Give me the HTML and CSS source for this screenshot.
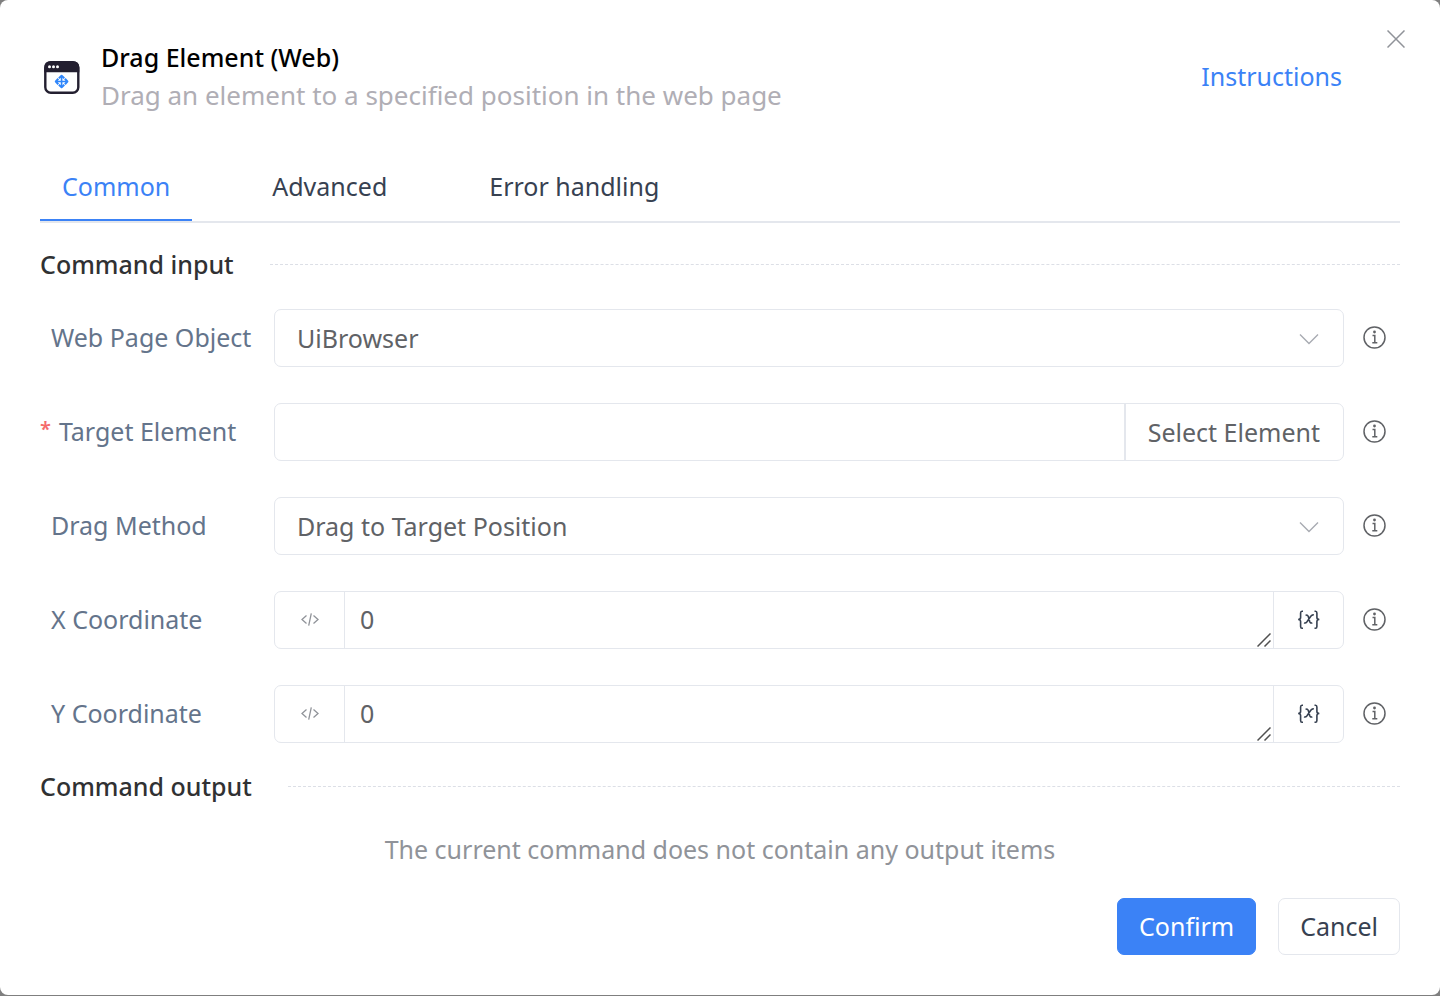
FILE: index.html
```html
<!DOCTYPE html>
<html lang="en">
<head>
<meta charset="utf-8">
<meta name="viewport" content="width=device-width, initial-scale=1">
<title>Drag Element (Web)</title>
<link rel="stylesheet" href="styles.css">
</head>
<body>
<svg class="sprite" aria-hidden="true">
  <symbol id="info" viewBox="0 0 24 24">
    <circle cx="11.500" cy="11.500" r="10.500" fill="none" stroke="currentColor" stroke-width="1.500"/>
    <circle cx="11.500" cy="6" r="1.400" fill="currentColor"/>
    <path d="M9.500 9.500h2.300v7.300M9.300 16.800h5" fill="none" stroke="currentColor" stroke-width="1.500"/>
  </symbol>
  <symbol id="chevron" viewBox="0 0 20 12">
    <path d="M1 1.5l9 9 9-9" fill="none" stroke="currentColor" stroke-width="1.4"/>
  </symbol>
  <symbol id="code" viewBox="0 0 18 14">
    <path d="M5.500 2.500L1 6.500l4.500 4M12.500 2.500L17 6.500l-4.500 4M10.300 .3L7.700 12.700" fill="none" stroke="currentColor" stroke-width="1.300"/>
  </symbol>
  <symbol id="variable" viewBox="0 0 24 20">
    <path d="M6 1.200H5Q3.600 1.200 3.600 3V7.500Q3.600 9.300 1.200 9.500Q3.600 9.700 3.600 11.500V16.500Q3.600 18.200 5 18.200H6M17.500 1.200H18.500Q19.900 1.200 19.900 3V7.500Q19.900 9.300 22.300 9.500Q19.900 9.700 19.900 11.500V16.500Q19.900 18.200 18.500 18.200H17.500" fill="none" stroke="currentColor" stroke-width="1.600"/>
    <path d="M8.600 5.500Q10.500 4.300 11.300 6.500L12.700 11.500Q13.400 13.700 15.300 12.700M16.800 5Q15.200 4.500 13.800 6.300L10 11.800Q8.700 13.500 7 12.900" fill="none" stroke="currentColor" stroke-width="1.600"/>
  </symbol>
  <symbol id="grip" viewBox="0 0 14 14">
    <path d="M.5 13.500L13.500 .5M7.500 13.500l6-6" fill="none" stroke="currentColor" stroke-width="1.500"/>
  </symbol>
</svg>

<main class="dialog" role="dialog" aria-labelledby="dialog-title">
  <button class="close" type="button" aria-label="Close">
    <svg width="18" height="18" viewBox="0 0 18 18"><path d="M.5 .5l17 17M17.500 .5L.5 17.500" fill="none" stroke="currentColor" stroke-width="1.500"/></svg>
  </button>

  <header class="header">
    <svg class="logo" width="36" height="38" viewBox="0 -4 36 38" aria-hidden="true">
      <rect x="1.300" y="1.300" width="33" height="30.500" rx="5.500" fill="#fff" stroke="#231f30" stroke-width="2.400"/>
      <path d="M.3 11.200V6.500Q.3 .3 6.500 .3H29Q35.300 .3 35.300 6.500V11.200Z" fill="#231f30"/>
      <g fill="#fff"><circle cx="5.500" cy="5.800" r="1.500"/><circle cx="9.500" cy="5.800" r="1.500"/><circle cx="13.500" cy="5.800" r="1.500"/></g>
      <path d="M17.600 15.500V25.500M12.600 20.500H22.600" stroke="#2f86fb" stroke-width="1.600"/>
      <path d="M14.900 17.200L17.600 14.700L20.300 17.200M14.900 23.800L17.600 26.300L20.300 23.800M14.300 17.800L11.800 20.500L14.300 23.200M20.900 17.800L23.400 20.500L20.900 23.200" fill="none" stroke="#2f86fb" stroke-width="2" stroke-linejoin="round"/>
    </svg>
    <div class="heading">
      <h1 class="title" id="dialog-title">Drag Element (Web)</h1>
      <p class="subtitle">Drag an element to a specified position in the web page</p>
    </div>
    <a class="instructions" href="#">Instructions</a>
  </header>

  <div class="tabs" role="tablist">
    <button class="tab active" type="button" role="tab" aria-selected="true">Common</button>
    <button class="tab" type="button" role="tab" aria-selected="false">Advanced</button>
    <button class="tab" type="button" role="tab" aria-selected="false">Error handling</button>
  </div>

  <form class="form">
    <h2 class="section">Command input</h2>
    <div class="rows">
      <div class="row">
        <label class="label" for="page-object">Web Page Object</label>
        <div class="field">
          <select class="control" id="page-object"><option>UiBrowser</option></select>
          <svg class="chevron"><use href="#chevron"/></svg>
        </div>
        <svg class="info"><use href="#info"/></svg>
      </div>
      <div class="row">
        <label class="label required" for="target">Target Element</label>
        <div class="field">
          <input class="control" id="target" type="text">
          <button class="pick" type="button">Select Element</button>
        </div>
        <svg class="info"><use href="#info"/></svg>
      </div>
      <div class="row">
        <label class="label" for="method">Drag Method</label>
        <div class="field">
          <select class="control" id="method"><option>Drag to Target Position</option></select>
          <svg class="chevron"><use href="#chevron"/></svg>
        </div>
        <svg class="info"><use href="#info"/></svg>
      </div>
      <div class="row">
        <label class="label" for="x">X Coordinate</label>
        <div class="field">
          <button class="addon code" type="button" aria-label="Expression mode"><svg width="18" height="14"><use href="#code"/></svg></button>
          <div class="area">
            <textarea class="control text" id="x" rows="1">0</textarea>
            <svg class="grip"><use href="#grip"/></svg>
          </div>
          <button class="addon variable" type="button" aria-label="Insert variable"><svg width="24" height="20"><use href="#variable"/></svg></button>
        </div>
        <svg class="info"><use href="#info"/></svg>
      </div>
      <div class="row">
        <label class="label" for="y">Y Coordinate</label>
        <div class="field">
          <button class="addon code" type="button" aria-label="Expression mode"><svg width="18" height="14"><use href="#code"/></svg></button>
          <div class="area">
            <textarea class="control text" id="y" rows="1">0</textarea>
            <svg class="grip"><use href="#grip"/></svg>
          </div>
          <button class="addon variable" type="button" aria-label="Insert variable"><svg width="24" height="20"><use href="#variable"/></svg></button>
        </div>
        <svg class="info"><use href="#info"/></svg>
      </div>
    </div>

    <h2 class="section">Command output</h2>
    <p class="empty">The current command does not contain any output items</p>

    <footer class="footer">
      <button class="button primary" type="submit">Confirm</button>
      <button class="button" type="button">Cancel</button>
    </footer>
  </form>
</main>
</body>
</html>
```
FILE: styles.css
```css
* {
  box-sizing: border-box;
}

body {
  margin: 0;
  padding-bottom: 1px;
  background: #7f7f7f;
  color: #374151;
  font: 25px/36px "Noto Sans", "Open Sans", sans-serif;
}

button,
input,
select,
textarea {
  margin: 0;
  padding: 0;
  border: 0;
  background: none;
  color: inherit;
  font: inherit;
}

button {
  cursor: pointer;
}

.sprite {
  display: none;
}

.dialog {
  position: relative;
  min-height: calc(100vh - 1px);
  padding: 38px 40px 40px;
  border-radius: 8px;
  background: #fff;
}

.close {
  position: absolute;
  top: 30px;
  right: 35px;
  display: flex;
  color: #909399;
}

.header {
  display: flex;
  align-items: center;
  padding: 0 58px 0 4px;
}

.heading {
  flex: 1;
  margin-left: 21px;
}

.title,
.subtitle {
  margin: 0;
  line-height: 38px;
}

.title {
  color: #000;
  font-size: 25px;
  font-weight: 500;
}

.subtitle {
  color: #b0aeb5;
  font-size: 26px;
}

.instructions {
  color: #3b82f6;
  text-decoration: none;
}

.tabs {
  display: flex;
  gap: 58px;
  margin-top: 40px;
  border-bottom: 2px solid #e4e7ed;
}

.tab {
  height: 67px;
  padding: 0 22px 2px;
  border-bottom: 2px solid transparent;
}

.tab.active {
  border-color: #3b82f6;
  color: #3b82f6;
}

.section {
  display: flex;
  align-items: center;
  gap: 36px;
  margin: 0;
  color: #303133;
  font-size: 25px;
  font-weight: 500;
}

.section::after {
  flex: 1;
  border-top: 1px dashed #dcdfe6;
  content: "";
}

.form {
  padding-top: 23px;
}

.rows {
  display: grid;
  gap: 36px;
  margin: 27px 0 25px;
}

.row {
  display: grid;
  grid-template-columns: 234px 1fr 24px;
  align-items: center;
  padding-right: 13px;
}

.label {
  padding: 0 0 2px 11px;
  color: #64748b;
}

.required {
  display: flex;
  gap: 8px;
  padding-left: 0;
}

.required::before {
  color: #f56c6c;
  font-size: 20px;
  font-weight: 600;
  line-height: 32px;
  content: "*";
}

.field {
  position: relative;
  display: flex;
  height: 58px;
  margin-right: 19px;
  border: 1px solid #e4e7ed;
  border-radius: 7px;
  color: #606266;
}

.control {
  flex: 1;
  width: 100%;
  min-width: 0;
  padding: 0 22px;
  appearance: none;
  outline: 0;
}

.chevron {
  position: absolute;
  top: 23px;
  right: 24px;
  width: 20px;
  height: 12px;
  color: #a8abb2;
  pointer-events: none;
}

.pick {
  padding: 0 23px 0 22px;
  border-left: 2px solid #e4e7ed;
}

.addon {
  display: flex;
  flex: 0 0 70px;
  align-items: center;
  justify-content: center;
}

.code {
  border-right: 1px solid #e4e7ed;
  color: #909399;
}

.variable {
  border-left: 1px solid #e4e7ed;
  color: #374151;
}

.area {
  position: relative;
  display: flex;
  flex: 1;
}

.text {
  padding: 9px 15px;
  resize: none;
}

.grip {
  position: absolute;
  right: 2px;
  bottom: 1px;
  width: 14px;
  height: 14px;
  color: #505050;
  pointer-events: none;
}

.info {
  width: 24px;
  height: 24px;
  color: #606266;
}

.empty {
  margin: 27px 0 31px;
  color: #909399;
  text-align: center;
}

.footer {
  display: flex;
  justify-content: flex-end;
  gap: 22px;
}

.button {
  height: 57px;
  padding: 0 21px 2px;
  border: 1px solid #e4e7ed;
  border-radius: 7px;
}

.primary {
  border-color: #3b82f6;
  background: #3b82f6;
  color: #fff;
}
```
